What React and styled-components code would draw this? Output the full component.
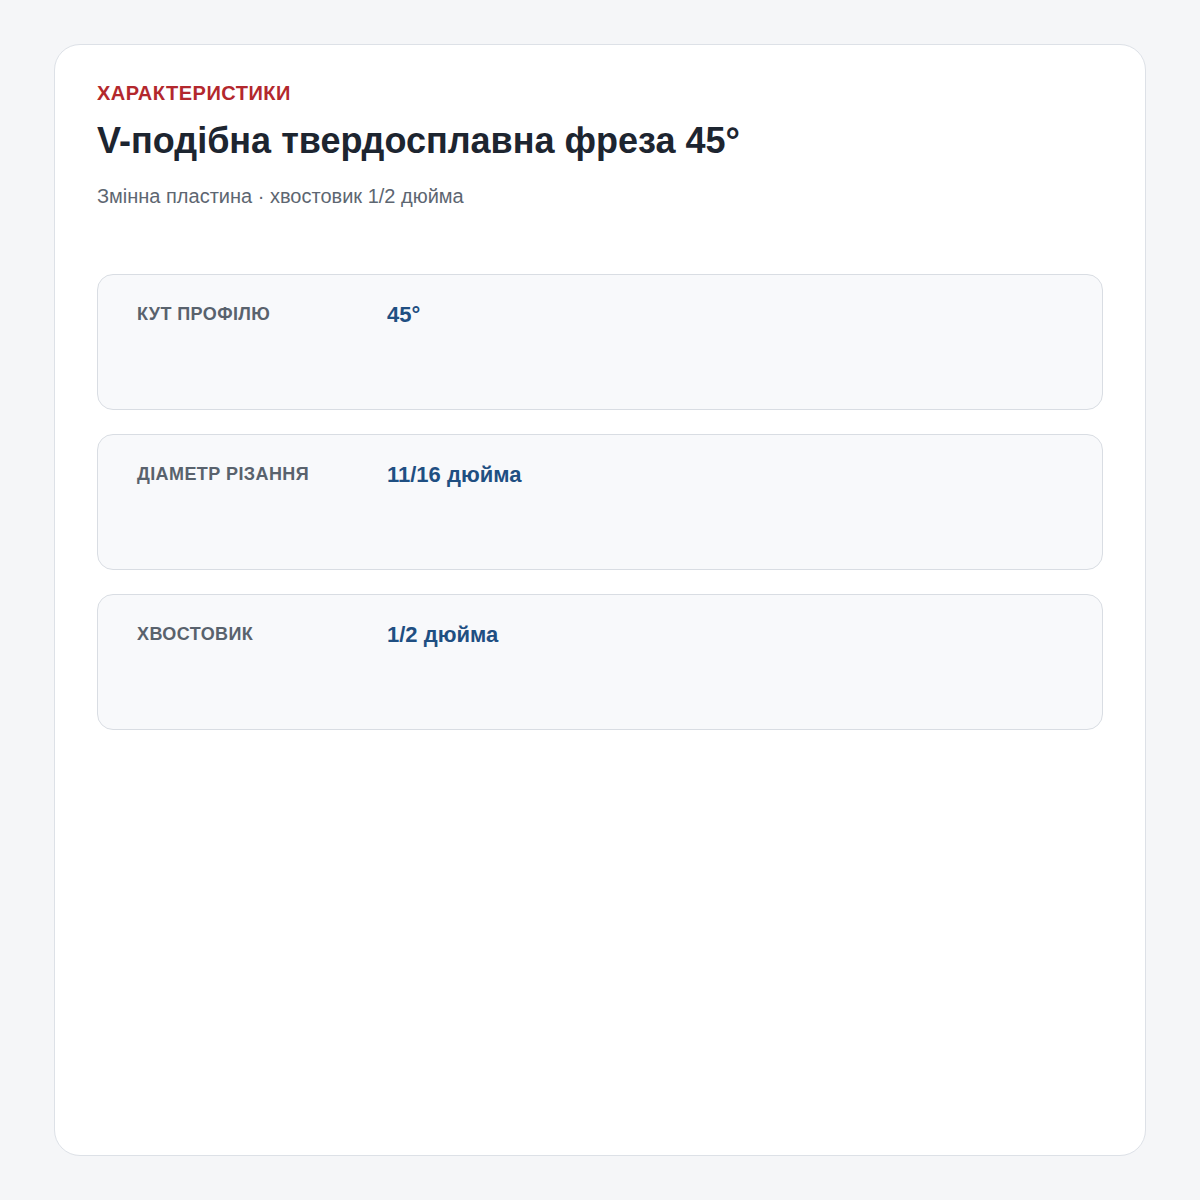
import styled, { createGlobalStyle } from 'styled-components';

const Global = createGlobalStyle`
	html, body {
		margin: 0;
		background: #f5f6f8;
		font-family: 'Liberation Sans', Arial, sans-serif;
	}
`;

const Page = styled.div`
	padding: 44px 54px;
	min-height: 1200px;
	box-sizing: border-box;
`;

const Card = styled.section`
	box-sizing: border-box;
	height: 1112px;
	background: #fff;
	border: 1.5px solid #dde1e7;
	border-radius: 26px;
	padding: 34px 42px;
`;

const Eyebrow = styled.div`
	color: #b3282d;
	font-size: 20px;
	font-weight: 700;
	letter-spacing: 0.5px;
	text-transform: uppercase;
	line-height: 28px;
`;

const Title = styled.h1`
	margin: 12px 0 0;
	color: #1d2530;
	font-size: 36px;
	font-weight: 700;
	line-height: 44px;
`;

const Subtitle = styled.p`
	margin: 19px 0 0;
	color: #5d6671;
	font-size: 20px;
	line-height: 28px;
`;

const SpecList = styled.div`
	display: flex;
	flex-direction: column;
	gap: 24px;
	margin-top: 64px;
`;

const SpecRow = styled.div`
	display: grid;
	grid-template-columns: 250px 1fr;
	align-items: start;
	min-height: 136px;
	box-sizing: border-box;
	padding: 27px 39px;
	background: #f8f9fb;
	border: 1.5px solid #d9dde3;
	border-radius: 16px;
`;

const Label = styled.div`
	color: #59626d;
	font-size: 18px;
	font-weight: 700;
	letter-spacing: 0.4px;
	text-transform: uppercase;
	line-height: 24px;
`;

const Value = styled.div`
	color: #1f4f82;
	font-size: 22px;
	font-weight: 700;
	line-height: 26px;
`;

const specs = [
	['Кут профілю', '45°'],
	['Діаметр різання', '11/16 дюйма'],
	['Хвостовик', '1/2 дюйма'],
];

export default function App() {
	return (
		<>
			<Global />
			<Page>
				<Card>
					<Eyebrow>Характеристики</Eyebrow>
					<Title>V-подібна твердосплавна фреза 45°</Title>
					<Subtitle>Змінна пластина · хвостовик 1/2 дюйма</Subtitle>
					<SpecList>
						{specs.map(([label, value]) => (
							<SpecRow key={label}>
								<Label>{label}</Label>
								<Value>{value}</Value>
							</SpecRow>
						))}
					</SpecList>
				</Card>
			</Page>
		</>
	);
}
